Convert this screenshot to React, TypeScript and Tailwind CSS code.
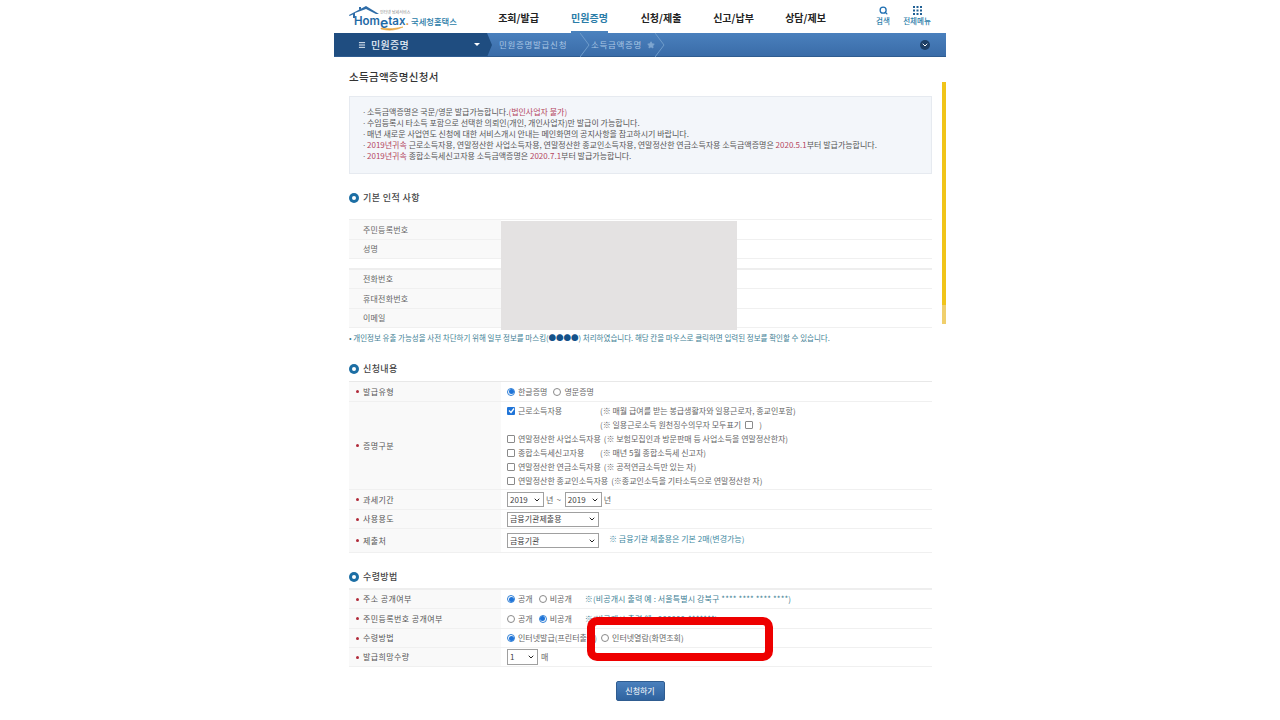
import React from 'react';
import { Search, Star, ChevronDown, Menu } from 'lucide-react';

const navItems = [
  { label: '조회/발급', width: 'w-[71px]' },
  { label: '민원증명', width: 'w-[71px]', active: true },
  { label: '신청/제출', width: 'w-[72px]' },
  { label: '신고/납부', width: 'w-[73px]' },
  { label: '상담/제보', width: 'w-[71px]' },
];

// header logo: roof and swoosh drawn, wordmark stays real text
const Logo = () => (
  <div className="relative w-[112px] h-[30px] ml-[15px] shrink-0">
    <svg className="absolute left-0 top-0" width="62" height="30" viewBox="0 0 62 30">
      <path d="M0 13 L17 4 L30 12 L27 12 L17 7 L6 11 L6 16 L4 16 L4 12.5 L0.5 14 Z" fill="#2f6da8" />
      <path d="M10 5 L10 8 L12 7 L12 5 Z" fill="#2f6da8" />
      <path d="M32 27 Q44 30 54 25 Q44 28 32 26 Z" fill="#e8a33a" stroke="#e8a33a" strokeWidth="0.6" />
    </svg>
    <div className="absolute left-[5px] top-[11px] flex items-baseline text-[11.5px] leading-[14px] font-semibold text-[#1f6aa5] font-['Inter',sans-serif]">
      Hom<span className="text-[14px] translate-y-[3px]">e</span>tax<span className="text-[#e58a1f]">.</span>
    </div>
    <div className="absolute left-[31px] top-[8px] text-[4px] leading-[5px] text-[#888] whitespace-nowrap">인터넷 납세서비스</div>
    <div className="absolute left-[62px] top-[13px] text-[8.3px] leading-[12px] font-medium text-[#2a7ca8] whitespace-nowrap">국세청홈택스</div>
  </div>
);

const Chevron = ({ tone }: { tone: string }) => (
  <svg width="10" height="24" viewBox="0 0 10 24" className="shrink-0">
    <path d="M0 0 L9 12 L0 24" fill="none" stroke={tone} strokeWidth="1" />
  </svg>
);

const Bullet = ({ children }: { children: React.ReactNode }) => (
  <li className="flex whitespace-nowrap h-[11px] items-center">
    <span className="w-[5px] text-[#777]">·</span>
    <span>{children}</span>
  </li>
);

const Red = ({ children }: { children: React.ReactNode }) => <span className="text-[#b5475f]">{children}</span>;

const SectionTitle = ({ children, className }: { children: React.ReactNode; className: string }) => (
  <div className={`flex items-center gap-[4px] ${className}`}>
    <span className="w-[10px] h-[10px] rounded-full bg-[#1c6ea4] flex items-center justify-center">
      <span className="w-[4px] h-[4px] rounded-full bg-white" />
    </span>
    <span className="text-[9px] leading-[12px] font-medium text-[#444] tracking-[0.4px]">{children}</span>
  </div>
);

const InfoRow = ({ label, h }: { label: string; h: string }) => (
  <div className={`flex ${h} border-b border-[#f0f0f0]`}>
    <div className="w-[152px] bg-[#f9f9f9] pl-[14px] flex items-center text-[8px] text-[#666] tracking-[0.2px]">{label}</div>
    <div className="flex-1" />
  </div>
);

const FormRow = ({ label, h, children }: { label: string; h: string; children: React.ReactNode }) => (
  <div className={`flex ${h} border-b border-[#f0f0f0]`}>
    <div className="w-[152px] shrink-0 bg-[#f9f9f9] pl-[7px] flex items-center text-[8px] text-[#555] tracking-[0.4px]">
      <span className="w-[3px] h-[3px] rounded-full bg-[#b02a3a] mr-[4px]" />
      {label}
    </div>
    <div className="flex-1 pl-[6px] flex items-center text-[8px] text-[#666] whitespace-nowrap">{children}</div>
  </div>
);

const Radio = ({ on }: { on?: boolean }) => (
  <span className={`w-[8px] h-[8px] rounded-full border bg-white flex items-center justify-center shrink-0 ${on ? 'border-[#2f7fd6]' : 'border-[#8a8a8a]'}`}>
    {on && <span className="w-[5px] h-[5px] rounded-full bg-[#1f74d8]" />}
  </span>
);

const Check = ({ on }: { on?: boolean }) =>
  on ? (
    <span className="w-[8px] h-[8px] rounded-[1px] bg-[#1f74d8] flex items-center justify-center shrink-0">
      <svg width="7" height="7" viewBox="0 0 7 7">
        <path d="M1 3.5 L3 5.5 L6 1.5" fill="none" stroke="#fff" strokeWidth="1.3" />
      </svg>
    </span>
  ) : (
    <span className="block w-[8px] h-[8px] rounded-[1px] border border-[#8a8a8a] bg-white shrink-0" />
  );

const Select = ({ value, w, h = 'h-[15px]' }: { value: string; w: string; h?: string }) => (
  <span className={`${w} ${h} border border-[#a0a0a0] bg-white flex items-center justify-between pl-[2px] pr-[2px] text-[8px] text-[#444] shrink-0`}>
    {value}
    <ChevronDown size={8} strokeWidth={3} className="text-[#222]" />
  </span>
);

const CheckLine = ({ on, name, nameW, note }: { on?: boolean; name: string; nameW: string; note: string }) => (
  <div className="flex items-center h-[14px]">
    <Check on={on} />
    <span className={`ml-[3px] ${nameW}`}>{name}</span>
    <span className={nameW ? '' : 'ml-[3px]'}>{note}</span>
  </div>
);

export default function App() {
  return (
    <div className="relative w-[1280px] h-[720px] overflow-hidden bg-white font-['Noto_Sans_CJK_KR','Noto_Sans',sans-serif]">
      <div className="relative w-[612px] ml-[334px]">
        {/* top header */}
        <header className="flex h-[33px] items-center">
          <Logo />
          <nav className="flex ml-[22px] h-full">
            {navItems.map((n) => (
              <div key={n.label} className={`${n.width} flex justify-center text-[10px] font-bold`}>
                <span className={`whitespace-nowrap flex items-center pt-[3px] border-b-[2px] ${n.active ? 'text-[#2a7ca8] border-[#4a82bd]' : 'text-[#222] border-transparent'}`}>
                  {n.label}
                </span>
              </div>
            ))}
          </nav>
          <div className="flex ml-[34px] gap-[11px] text-[7.5px] font-medium text-[#2a7ca8]">
            <div className="flex flex-col items-center w-[16px]">
              <Search size={9} strokeWidth={3.5} className="text-[#1f6fb2]" />
              <span className="whitespace-nowrap leading-[12px]">검색</span>
            </div>
            <div className="flex flex-col items-center w-[30px]">
              <svg width="9" height="9" viewBox="0 0 9 9" fill="#1f5f94">
                <rect x="0" y="0" width="2" height="2" /><rect x="3.5" y="0" width="2" height="2" /><rect x="7" y="0" width="2" height="2" />
                <rect x="0" y="3.5" width="2" height="2" /><rect x="3.5" y="3.5" width="2" height="2" /><rect x="7" y="3.5" width="2" height="2" />
                <rect x="0" y="7" width="2" height="2" /><rect x="3.5" y="7" width="2" height="2" /><rect x="7" y="7" width="2" height="2" />
              </svg>
              <span className="whitespace-nowrap leading-[12px]">전체메뉴</span>
            </div>
          </div>
        </header>

        {/* blue breadcrumb bar */}
        <div className="flex h-[24px] items-center bg-gradient-to-b from-[#4a80bd] to-[#3a6ca8] border-b border-[#2f5c90] text-[8.5px]">
          <div className="flex items-center w-[153px] h-full bg-[#1f4d80] pl-[24px] pr-[7px] text-[#e6eef6] font-medium">
            <Menu size={8} strokeWidth={3} />
            <span className="ml-[5px] text-[10px] tracking-[0.3px]">민원증명</span>
            <span className="ml-auto w-0 h-0 border-x-[3px] border-x-transparent border-t-[3px] border-t-white" />
          </div>
          <svg width="5" height="24" viewBox="0 0 5 24" className="shrink-0">
            <path d="M0 0 L5 12 L0 24 Z" fill="#1f4d80" />
          </svg>
          <span className="ml-[7px] w-[81px] text-[#a9c6e4] tracking-[0.7px] whitespace-nowrap">민원증명발급신청</span>
          <Chevron tone="#6f9ccb" />
          <span className="ml-[1px] text-[#a9c6e4] tracking-[0.7px] whitespace-nowrap">소득금액증명</span>
          <Star size={8} fill="#7ea6d0" className="ml-[5px] text-[#7ea6d0]" />
          <Chevron tone="#6f9ccb" />
          <span className="ml-auto mr-[16px] w-[10px] h-[10px] rounded-full bg-[#1d3f66] flex items-center justify-center">
            <ChevronDown size={8} strokeWidth={3} className="text-white" />
          </span>
        </div>

        <main className="px-[15px] pr-[14px]">
          <h1 className="mt-[13px] text-[10.5px] leading-[14px] font-medium text-[#333] tracking-[0.3px]">소득금액증명신청서</h1>

          <ul className="mt-[12px] h-[78px] bg-[#f3f6fa] border border-[#e6eaf0] pt-[9px] pl-[12px] text-[8px] leading-[11px] text-[#555]">
            <Bullet>소득금액증명은 국문/영문 발급가능합니다.<Red>(법인사업자 불가)</Red></Bullet>
            <Bullet>수임등록시 타소득 포함으로 선택한 의뢰인(개인, 개인사업자)만 발급이 가능합니다.</Bullet>
            <Bullet>매년 새로운 사업연도 신청에 대한 서비스개시 안내는 메인화면의 공지사항을 참고하시기 바랍니다.</Bullet>
            <Bullet><Red>2019년귀속</Red> 근로소득자용, 연말정산한 사업소득자용, 연말정산한 종교인소득자용, 연말정산한 연금소득자용 소득금액증명은 <Red>2020.5.1</Red>부터 발급가능합니다.</Bullet>
            <Bullet><Red>2019년귀속</Red> 종합소득세신고자용 소득금액증명은 <Red>2020.7.1</Red>부터 발급가능합니다.</Bullet>
          </ul>

          <SectionTitle className="mt-[18px]">기본 인적 사항</SectionTitle>

          <div className="mt-[15px] relative">
            <div className="border-t border-[#f0f0f0]">
              <InfoRow label="주민등록번호" h="h-[20px]" />
              <InfoRow label="성명" h="h-[19px]" />
            </div>
            <div className="mt-[9px] border-t-2 border-[#eeeeee]">
              <InfoRow label="전화번호" h="h-[19px]" />
              <InfoRow label="휴대전화번호" h="h-[20px]" />
              <InfoRow label="이메일" h="h-[19px]" />
            </div>
            {/* masked personal data */}
            <div className="absolute left-[152px] top-[2px] w-[236px] h-[109px] bg-[#e4e2e2]" />
          </div>

          <p className="mt-[5px] text-[7.5px] leading-[10px] text-[#3f7f95] whitespace-nowrap">
            • 개인정보 유출 가능성을 사전 차단하기 위해 일부 정보를 마스킹(<span className="text-[#14528a]">●●●●</span>) 처리하였습니다. 해당 칸을 마우스로 클릭하면 입력된 정보를 확인할 수 있습니다.
          </p>

          <SectionTitle className="mt-[20px]">신청내용</SectionTitle>

          <div className="mt-[6px] border-t border-[#e8e8e8]">
            <FormRow label="발급유형" h="h-[20px]">
              <Radio on /><span className="ml-[3px]">한글증명</span>
              <span className="ml-[6px]"><Radio /></span><span className="ml-[3px]">영문증명</span>
            </FormRow>
            <FormRow label="증명구분" h="h-[88px]">
              <div className="flex flex-col">
                <CheckLine on name="근로소득자용" nameW="w-[82px]" note="(※ 매월 급여를 받는 봉급생활자와 일용근로자, 종교인포함)" />
                <div className="flex items-center h-[14px] ml-[93px]">
                  (※ 일용근로소득 원천징수의무자 모두표기
                  <span className="ml-[4px]"><Check /></span>
                  <span className="ml-[6px]">)</span>
                </div>
                <CheckLine name="연말정산한 사업소득자용" nameW="" note="(※ 보험모집인과 방문판매 등 사업소득을 연말정산한자)" />
                <CheckLine name="종합소득세신고자용" nameW="w-[82px]" note="(※ 매년 5월 종합소득세 신고자)" />
                <CheckLine name="연말정산한 연금소득자용" nameW="" note="(※ 공적연금소득만 있는 자)" />
                <CheckLine name="연말정산한 종교인소득자용" nameW="" note="(※종교인소득을 기타소득으로 연말정산한 자)" />
              </div>
            </FormRow>
            <FormRow label="과세기간" h="h-[20px]">
              <Select value="2019" w="w-[37px]" />
              <span className="ml-[2px]">년</span>
              <span className="ml-[3px]">~</span>
              <span className="ml-[4px]"><Select value="2019" w="w-[37px]" /></span>
              <span className="ml-[2px]">년</span>
            </FormRow>
            <FormRow label="사용용도" h="h-[19px]">
              <Select value="금융기관제출용" w="w-[92px]" />
            </FormRow>
            <FormRow label="제출처" h="h-[24px]">
              <Select value="금융기관" w="w-[92px]" />
              <span className="ml-[10px] -translate-y-[2px] text-[#3f8a9f]">※ 금융기관 제출용은 기본 2매(변경가능)</span>
            </FormRow>
          </div>

          <SectionTitle className="mt-[18px]">수령방법</SectionTitle>

          <div className="mt-[5px] border-t-2 border-[#eeeeee]">
            <FormRow label="주소 공개여부" h="h-[19px]">
              <Radio on /><span className="ml-[3px]">공개</span>
              <span className="ml-[6px]"><Radio /></span><span className="ml-[3px]">비공개</span>
              <span className="ml-[13px] text-[#3f7f95] tracking-[0.1px]">※(비공개시 출력 예 : 서울특별시 강북구 **** **** **** ****)</span>
            </FormRow>
            <FormRow label="주민등록번호 공개여부" h="h-[20px]">
              <Radio /><span className="ml-[3px]">공개</span>
              <span className="ml-[6px]"><Radio on /></span><span className="ml-[3px]">비공개</span>
              <span className="ml-[13px] text-[#3f7f95] tracking-[0.1px]">※(비공개시 출력 예 : 000000-*******)</span>
            </FormRow>
            <FormRow label="수령방법" h="h-[19px]">
              <Radio on /><span className="ml-[3px]">인터넷발급(프린터출력)</span>
              <span className="ml-[4px]"><Radio /></span><span className="ml-[3px]">인터넷열람(화면조회)</span>
            </FormRow>
            <FormRow label="발급희망수량" h="h-[19px]">
              <Select value="1" w="w-[31px]" h="h-[16px]" />
              <span className="ml-[3px]">매</span>
            </FormRow>
          </div>

          <div className="mt-[14px] flex justify-center pr-[1px]">
            <button className="w-[49px] h-[20px] rounded-[2px] bg-gradient-to-b from-[#4a80bd] to-[#2f639f] border border-[#2f5c90] text-[8px] text-white">신청하기</button>
          </div>
        </main>

        {/* red annotation over the form */}
        <div className="absolute left-[253px] top-[617px] w-[186px] h-[44px] rounded-[10px] border-[8px] border-[#ee0000]" />
        {/* yellow scroll marker */}
        <div className="absolute left-[608px] top-[82px] w-[4px] h-[242px] bg-gradient-to-b from-[#f0c419] from-92% to-[#f0cf6c] to-92%" />
      </div>
    </div>
  );
}
